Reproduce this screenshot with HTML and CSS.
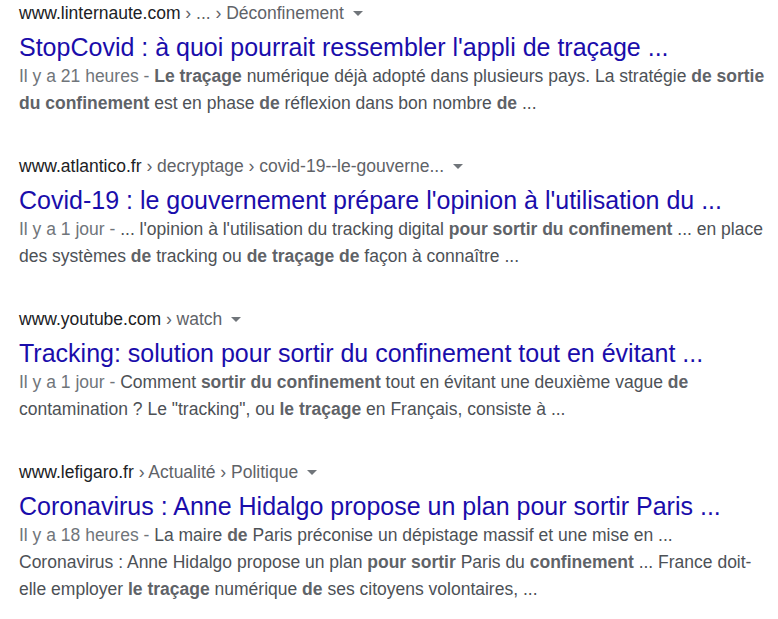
FILE: index.html
```html
<!DOCTYPE html>
<html lang="fr">
<head>
    <meta charset="UTF-8" />
    <meta name="viewport" content="width=device-width, initial-scale=1.0"/>
    <title>Résultats de recherche</title>
    <link rel="stylesheet" href="styles.css">
</head>
<body>
    <div class="results">
        <div class="result">
            <div class="cite">www.linternaute.com<span class="crumbs"> › ... › Déconfinement</span><span class="arrow"></span></div>
            <a class="title" href="#">StopCovid : à quoi pourrait ressembler l'appli de traçage ...</a>
            <div class="snippet"><span class="date">Il y a 21 heures - </span><b>Le traçage</b> numérique déjà adopté dans plusieurs pays. La stratégie <b>de sortie du confinement</b> est en phase <b>de</b> réflexion dans bon nombre <b>de</b> ...</div>
        </div>

        <div class="result">
            <div class="cite">www.atlantico.fr<span class="crumbs"> › decryptage › covid-19--le-gouverne...</span><span class="arrow"></span></div>
            <a class="title" href="#">Covid-19 : le gouvernement prépare l'opinion à l'utilisation du ...</a>
            <div class="snippet"><span class="date">Il y a 1 jour - </span>... l'opinion à l'utilisation du tracking digital <b>pour sortir du confinement</b> ... en place des systèmes <b>de</b> tracking ou <b>de traçage de</b> façon à connaître ...</div>
        </div>

        <div class="result">
            <div class="cite">www.youtube.com<span class="crumbs"> › watch</span><span class="arrow"></span></div>
            <a class="title" href="#">Tracking: solution pour sortir du confinement tout en évitant ...</a>
            <div class="snippet"><span class="date">Il y a 1 jour - </span>Comment <b>sortir du confinement</b> tout en évitant une deuxième vague <b>de</b> contamination ? Le "tracking", ou <b>le traçage</b> en Français, consiste à ...</div>
        </div>

        <div class="result">
            <div class="cite">www.lefigaro.fr<span class="crumbs"> › Actualité › Politique</span><span class="arrow"></span></div>
            <a class="title" href="#">Coronavirus : Anne Hidalgo propose un plan pour sortir Paris ...</a>
            <div class="snippet"><span class="date">Il y a 18 heures - </span>La maire <b>de</b> Paris préconise un dépistage massif et une mise en ...<br>Coronavirus : Anne Hidalgo propose un plan <b>pour sortir</b> Paris du <b>confinement</b> ... France doit-elle employer <b>le traçage</b> numérique <b>de</b> ses citoyens volontaires, ...</div>
        </div>
    </div>
</body>
</html>
```

FILE: styles.css
```css
body {
    margin: 0;
    background: #fff;
    font-family: "Liberation Sans", Arial, sans-serif;
}
.results {
    padding: 2px 0 0 19px;
    width: 755px;
}
.result {
    margin-bottom: 38px;
}
.cite {
    font-size: 17.5px;
    line-height: 22px;
    color: #202124;
    display: flex;
    align-items: center;
    white-space: nowrap;
}
.crumbs {
    color: #5f6368;
    white-space: pre;
}
.arrow {
    margin-left: 9px;
    margin-top: 1px;
    border-left: 5px solid transparent;
    border-right: 5px solid transparent;
    border-top: 5px solid #70757a;
}
.title {
    display: block;
    margin-top: 8px;
    font-size: 25px;
    line-height: 30px;
    color: #1a0dab;
    text-decoration: none;
    white-space: nowrap;
}
.snippet {
    margin-top: 1px;
    font-size: 17.5px;
    line-height: 27px;
    color: #4d5156;
}
.snippet b {
    color: #5f6368;
}
.date {
    color: #70757a;
}
```
